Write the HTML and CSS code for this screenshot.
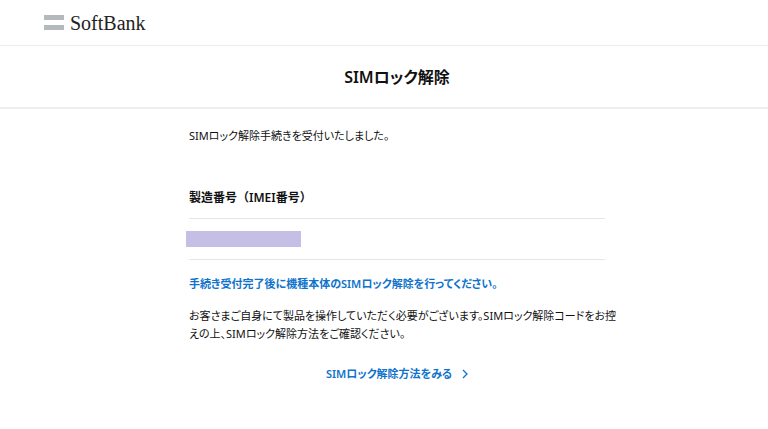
FILE: index.html
```
<!DOCTYPE html>
<html lang="ja">
<head>
  <meta charset="UTF-8" />
  <meta name="viewport" content="width=device-width, initial-scale=1" />
  <title>SIMロック解除 | SoftBank</title>
  <link rel="stylesheet" href="styles.css">
</head>
<body>
  <header class="site-header">
    <a class="logo" href="#">
      <svg class="logo-mark" viewBox="0 0 20 15" aria-hidden="true">
        <path fill="#b4b9bb" d="M0 0h20v5H0zM0 10h20v5H0z" />
      </svg>
      <span class="logo-text">SoftBank</span>
    </a>
  </header>

  <div class="page-title">
    <h1>SIMロック解除</h1>
  </div>

  <main class="container">
    <div class="content">
      <p class="lead">SIMロック解除手続きを受付いたしました。</p>

      <section class="imei">
        <h2>製造番号（IMEI番号）</h2>
        <div class="imei-value"><span class="mask"></span></div>
      </section>

      <p class="notice">手続き受付完了後に機種本体のSIMロック解除を行ってください。</p>
      <p class="description">お客さまご自身にて製品を操作していただく必要がございます。SIMロック解除コードをお控<br>えの上、SIMロック解除方法をご確認ください。</p>

      <div class="link-area">
        <a class="text-link" href="#">
          SIMロック解除方法をみる
          <svg class="arrow" viewBox="0 0 6 10" aria-hidden="true">
            <path d="M1 1l4 4-4 4" fill="none" stroke="currentColor" stroke-width="1.3" />
          </svg>
        </a>
      </div>
    </div>
  </main>
</body>
</html>
```

FILE: styles.css
```
* {
  box-sizing: border-box;
}
body {
  margin: 0;
  background: #fff;
  color: #111;
  font-family: "Noto Sans", "Noto Sans CJK JP", sans-serif;
  font-size: 11px;
  line-height: 18px;
  font-feature-settings: "palt";
}
h1, h2, p {
  margin: 0;
}
a {
  text-decoration: none;
}

.site-header {
  display: flex;
  align-items: center;
  height: 46px;
  padding: 0 44px;
  border-bottom: 1px solid #ececec;
}
.logo {
  display: flex;
  align-items: center;
  gap: 6px;
  color: #222;
}
.logo-mark {
  width: 20px;
  height: 15px;
}
.logo-text {
  font-family: "Liberation Serif", serif;
  font-size: 20px;
  line-height: 24px;
}

.page-title {
  padding: 18px 0 17px 26px;
  border-bottom: 2px solid #eee;
  text-align: center;
}
.page-title h1 {
  font-size: 16px;
  line-height: 26px;
  font-weight: 600;
}

.container {
  padding: 18px 0 32px 26px;
}
.content {
  max-width: 416px;
  margin: 0 auto;
}
.imei {
  margin-top: 44px;
}
.imei h2 {
  padding-bottom: 11px;
  border-bottom: 1px solid #e6e6e6;
  font-size: 12px;
  line-height: 18px;
  font-weight: 600;
  font-feature-settings: normal;
}
.imei-value {
  padding: 12px 0;
  border-bottom: 1px solid #e6e6e6;
}
.mask {
  display: block;
  width: 115px;
  height: 16px;
  margin-left: -3px;
  background: #c6bfe5;
}
.notice {
  margin-top: 15px;
  color: #0f73cc;
  font-weight: 600;
}
.description {
  margin-top: 14px;
}
.link-area {
  margin-top: 22px;
  text-align: center;
}
.text-link {
  display: inline-flex;
  align-items: center;
  gap: 10px;
  color: #0f73cc;
  font-weight: 600;
}
.arrow {
  width: 6px;
  height: 10px;
}

/* keep the two description lines together on wide windows */
@media (min-width: 480px) {
  .description {
    white-space: nowrap;
  }
}
```
